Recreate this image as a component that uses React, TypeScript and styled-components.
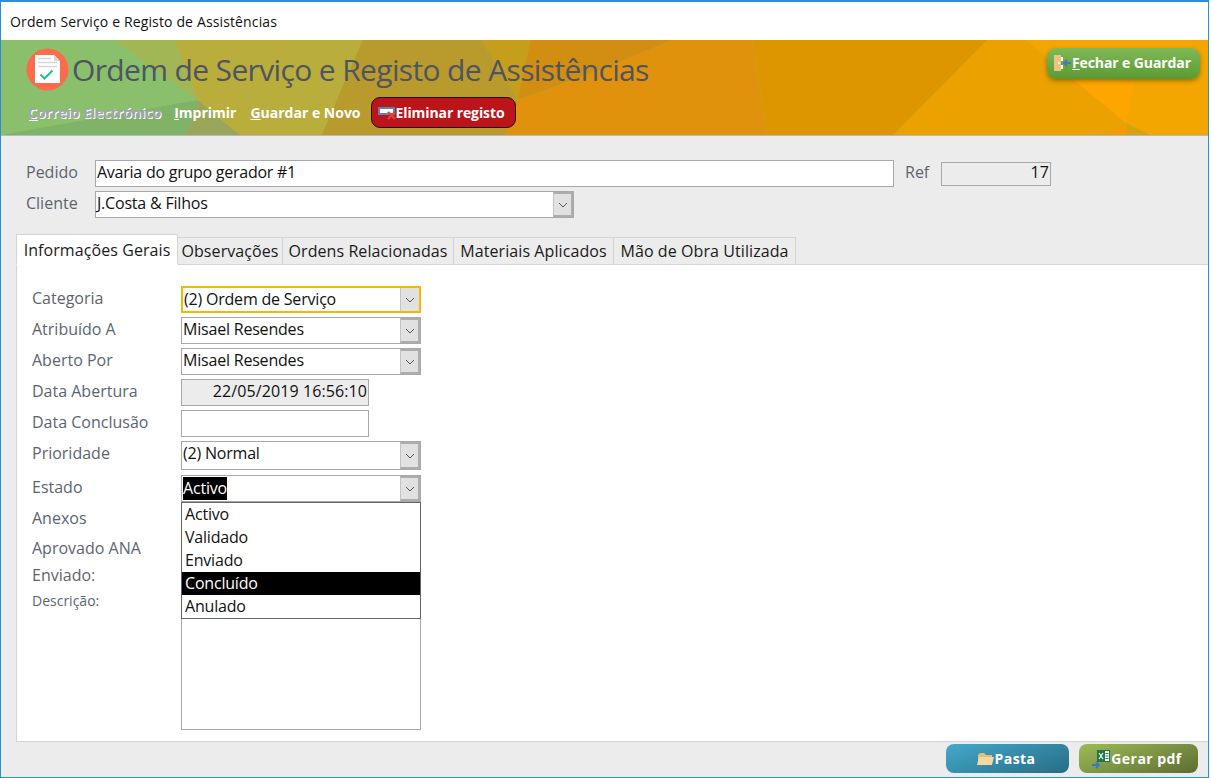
import React from 'react';
import styled, { createGlobalStyle } from 'styled-components';

const GlobalStyle = createGlobalStyle`
  html, body {
    margin: 0;
    padding: 0;
    background: #fff;
    font-family: 'Open Sans', 'Noto Sans', 'Liberation Sans', sans-serif;
  }
  * { box-sizing: border-box; }
`;

const Window = styled.div`
  display: flex;
  flex-direction: column;
  width: 1209px;
  height: 778px;
  border: 1px solid #2b8fd8;
  border-top-width: 2px;
  overflow: hidden;
  background: #ececec;
`;

const TitleBar = styled.div`
  display: flex;
  align-items: center;
  height: 38px;
  padding: 0 0 0 9px;
  background: #fff;
  font-size: 14px;
  letter-spacing: 0.14px;
  color: #111;
`;

const Banner = styled.header`
  position: relative;
  flex: none;
  height: 96px;
  padding: 8px 8px 0 25px;
  border-bottom: 1px solid #b9b9b9;
  overflow: hidden;
`;

const BannerArt = styled.svg`
  position: absolute;
  inset: 0;
  width: 100%;
  height: 95px;
`;

const HeadingRow = styled.div`
  position: relative;
  display: flex;
  align-items: flex-start;
  height: 49px;
`;

const Heading = styled.h1`
  margin: 0 0 0 3px;
  font-size: 30px;
  font-weight: 400;
  line-height: 43px;
  letter-spacing: -0.64px;
  color: #4e5462;
  white-space: nowrap;
`;

const CloseButton = styled.div`
  display: flex;
  align-items: center;
  gap: 1px;
  height: 31px;
  margin-left: auto;
  padding: 0 8px 2px 7px;
  width: 153px;
  border-radius: 9px;
  background: linear-gradient(#7fb955, #5b9a33);
  box-shadow: 0 2px 4px rgba(90, 70, 0, 0.55);
  font-size: 14px;
  font-weight: 700;
  letter-spacing: -0.1px;
  color: #fff;
  white-space: nowrap;
`;

const ActionRow = styled.nav`
  position: relative;
  display: flex;
  align-items: center;
  height: 31px;
  padding-left: 2px;
`;

const ActionLink = styled.span<{ $disabled?: boolean; $gap?: number }>`
  margin-right: ${p => p.$gap ?? 13}px;
  font-size: 14px;
  font-weight: 700;
  color: ${p => (p.$disabled ? '#a3a3b4' : '#fff')};
  text-shadow: ${p => (p.$disabled ? '1px 1px 0 #fff' : 'none')};
  white-space: nowrap;
`;

const AccessKey = styled.span`
  text-decoration: underline;
`;

const DeleteButton = styled.div`
  display: flex;
  align-items: center;
  flex: none;
  height: 31px;
  width: 145px;
  padding-left: 6px;
  border: 1px solid #2a0c0c;
  border-radius: 9px;
  background: #bb141a;
  font-size: 14px;
  font-weight: 700;
  letter-spacing: -0.1px;
  color: #fff;
  white-space: nowrap;
`;

const Body = styled.main`
  flex: 1;
  display: flex;
  flex-direction: column;
  min-height: 0;
  padding: 24px 0 0 15px;
`;

const TopRow = styled.div<{ $gap?: number }>`
  display: flex;
  align-items: center;
  height: 27px;
  margin-bottom: ${p => p.$gap ?? 4}px;
  padding-left: 10px;
`;

const TopLabel = styled.label<{ $width?: number; $inset?: number }>`
  width: ${p => p.$width ?? 69}px;
  margin-left: ${p => p.$inset ?? 0}px;
  padding-bottom: 3px;
  font-size: 16px;
  color: #5b6572;
`;

const Field = styled.div<{ $width: number; $height?: number; $readOnly?: boolean; $right?: boolean }>`
  display: flex;
  align-items: center;
  justify-content: ${p => (p.$right ? 'flex-end' : 'flex-start')};
  flex: none;
  width: ${p => p.$width}px;
  height: ${p => p.$height ?? 27}px;
  padding: 0 1px 3px;
  border: 1px solid #a8a8ab;
  background: ${p => (p.$readOnly ? '#ececec' : '#fff')};
  font-size: 16px;
  letter-spacing: ${p => (p.$right ? 0.1 : -0.25)}px;
  color: #111;
  white-space: nowrap;
`;

const Combo = styled.div<{ $width: number; $height?: number; $focused?: boolean }>`
  position: relative;
  display: flex;
  align-items: stretch;
  flex: none;
  width: ${p => p.$width}px;
  height: ${p => p.$height ?? 27}px;
  border: ${p => (p.$focused ? '2px solid #f5b800' : '1px solid #a8a8ab')};
  background: #fff;
  font-size: 16px;
  letter-spacing: -0.2px;
  color: #111;
`;

const ComboText = styled.div<{ $raised?: number }>`
  flex: 1;
  display: flex;
  align-items: center;
  padding: 0 1px ${p => p.$raised ?? 3}px;
  white-space: nowrap;
`;

const ComboArrow = styled.div<{ $focused?: boolean }>`
  display: flex;
  align-items: center;
  justify-content: center;
  width: ${p => (p.$focused ? 19 : 20)}px;
  border: solid #adadad;
  border-width: ${p => (p.$focused ? 0 : '2px 2px 2px 0')};
  border-left: 1px solid #c4c4c4;
  background: #e1e1e1;
`;

const Selected = styled.span`
  display: block;
  height: 23px;
  line-height: 22px;
  margin-top: 2px;
  background: #000;
  color: #fff;
`;

const TabStrip = styled.div`
  position: relative;
  z-index: 1;
  display: flex;
  align-items: flex-end;
  height: 31px;
  margin-top: 16px;
  margin-bottom: -1px;
`;

const Tab = styled.div<{ $active?: boolean; $width: number }>`
  display: flex;
  align-items: center;
  justify-content: center;
  width: ${p => p.$width}px;
  height: ${p => (p.$active ? 31 : 28)}px;
  border: 1px solid #d4d4d4;
  border-left-width: ${p => (p.$active ? 1 : 0)}px;
  border-bottom-color: ${p => (p.$active ? '#fff' : '#d4d4d4')};
  background: ${p => (p.$active ? '#fff' : '#ececec')};
  font-size: 16px;
  letter-spacing: 0.08px;
  color: #1a1a1a;
  white-space: nowrap;
`;

const Panel = styled.section`
  flex: none;
  height: 478px;
  padding: 21px 0 0 15px;
  border: 1px solid #d4d4d4;
  border-right: none;
  background: #fff;
`;

const FormRow = styled.div<{ $height?: number; $gap?: number; $top?: boolean }>`
  display: flex;
  align-items: ${p => (p.$top ? 'flex-start' : 'center')};
  height: ${p => p.$height ?? 27}px;
  margin-bottom: ${p => p.$gap ?? 4}px;
`;

const FormLabel = styled.label<{ $small?: boolean; $offset?: number; $lift?: number }>`
  flex: none;
  width: 149px;
  margin-top: ${p => p.$offset ?? 0}px;
  padding-bottom: ${p => p.$lift ?? 3}px;
  font-size: ${p => (p.$small ? 14 : 16)}px;
  color: #5b6572;
`;

const DropList = styled.ul`
  position: absolute;
  top: 26px;
  left: -1px;
  z-index: 2;
  width: 240px;
  margin: 0;
  padding: 0;
  list-style: none;
  border: 1px solid #646464;
  background: #fff;
`;

const DropItem = styled.li<{ $selected?: boolean }>`
  height: 23px;
  padding-left: 3px;
  line-height: 22px;
  background: ${p => (p.$selected ? '#000' : 'transparent')};
  color: ${p => (p.$selected ? '#fff' : '#111')};
`;

const DescriptionBox = styled.div`
  width: 240px;
  height: 140px;
  border: 1px solid #a8a8ab;
  background: #fff;
`;

const Footer = styled.footer`
  flex: 1;
  display: flex;
  justify-content: flex-end;
  gap: 10px;
  padding: 2px 10px 0 0;
`;

const FooterButton = styled.div<{ $tone: 'blue' | 'olive'; $width: number }>`
  display: flex;
  align-items: center;
  justify-content: center;
  gap: 1px;
  width: ${p => p.$width}px;
  height: 29px;
  padding-right: 3px;
  border-radius: 8px;
  background: ${p =>
    p.$tone === 'blue'
      ? 'linear-gradient(160deg, #43a9cb, #286c85)'
      : 'linear-gradient(160deg, #9dbb55, #5d6c34)'};
  font-size: 14px;
  font-weight: 700;
  letter-spacing: 0.45px;
  color: #fff;
  white-space: nowrap;
`;

const Chevron = () => (
  <svg width="10" height="6" viewBox="0 0 10 6" fill="none" aria-hidden="true">
    <path d="M1 1l4 4 4-4" stroke="#555" strokeWidth="1" />
  </svg>
);

const ArtPolys: [string, string][] = [
  ['0,0 1208,0 1208,95 0,95', '#8ac06b'],
  ['0,95 197,60 185,95', '#80b268'],
  ['113,0 174,0 197,60', '#a3b655'],
  ['197,60 239,95 185,95', '#9aa65a'],
  ['174,0 362,0 321,95 239,95 197,60', '#b9ad3b'],
  ['362,0 481,0 517,60 504,95 321,95', '#b99a2d'],
  ['481,0 530,0 517,60', '#c79d1c'],
  ['530,0 672,0 600,30 517,60', '#d28e10'],
  ['517,60 600,30 672,0 752,0 767,95 504,95', '#e0920d'],
  ['752,0 987,0 893,95 767,95', '#de9600'],
  ['987,0 1025,0 1126,83 1100,95 893,95', '#eba100'],
  ['1025,0 1208,0 1208,95 1150,95 1126,83', '#f3a600'],
  ['1060,29 1134,43 1126,83', '#ffa500'],
  ['1100,95 1126,83 1126,95', '#f59a00'],
  ['1126,83 1150,95 1126,95', '#d9a010'],
];

const NoteIcon = () => (
  <svg width="43" height="43" viewBox="0 0 43 43" aria-hidden="true">
    <circle cx="21.5" cy="21.5" r="21" fill="#fb6b4c" />
    <path d="M9 7h19l6 6v22H9z" fill="#fff" />
    <path d="M28 7l6 6h-6z" fill="#d8d8d8" />
    <path d="M12 10.5h13M12 14.5h19M12 18.5h19" stroke="#d5d5da" strokeWidth="1.3" />
    <path d="M14.5 26.5l4 4 8-8" fill="none" stroke="#2bbd9a" strokeWidth="2.2" />
  </svg>
);

const DoorIcon = () => (
  <svg width="17" height="18" viewBox="0 0 17 18" aria-hidden="true">
    <path d="M0 1h7v16H0z" fill="#e8c585" />
    <path d="M7 3h2v4H7zM7 11h2v4H7z" fill="#fff" />
    <circle cx="5" cy="9" r="0.9" fill="#fff" />
    <path d="M17 9H10M13 6l-3 3 3 3" fill="none" stroke="#4a78b8" strokeWidth="2" />
  </svg>
);

const RemoveIcon = () => (
  <svg width="18" height="16" viewBox="0 0 18 16" aria-hidden="true">
    <rect x="1" y="3" width="15" height="6" fill="#fff" stroke="#5f83b5" strokeWidth="2" />
    <path d="M10 7l7 7M17 7l-7 7" stroke="#d9453c" strokeWidth="2.4" />
  </svg>
);

const FolderIcon = () => (
  <svg width="17" height="14" viewBox="0 0 17 14" aria-hidden="true">
    <path d="M1 13V3l2-2h4l2 2h6v10z" fill="#e6bd7a" />
    <path d="M0 13l2-8h15l-2 8z" fill="#f5d7a2" />
  </svg>
);

const SheetIcon = () => (
  <svg width="18" height="20" viewBox="0 0 18 20" aria-hidden="true">
    <rect x="5" y="1" width="13" height="12" fill="#1f7a45" />
    <rect x="13" y="2" width="4" height="10" fill="#fff" />
    <path d="M7 4l4 6M11 4l-4 6" stroke="#fff" strokeWidth="1.2" />
    <path d="M13.5 4.5h3M13.5 7h3M13.5 9.5h3" stroke="#1f7a45" />
    <path d="M0 16h6M4 13l3 3-3 3" fill="none" stroke="#3c78c0" strokeWidth="1.8" />
  </svg>
);

const STATES = ['Activo', 'Validado', 'Enviado', 'Concluído', 'Anulado'];

const TABS = [
  { label: 'Informações Gerais', width: 162, active: true },
  { label: 'Observações', width: 105 },
  { label: 'Ordens Relacionadas', width: 171 },
  { label: 'Materiais Aplicados', width: 160 },
  { label: 'Mão de Obra Utilizada', width: 182 },
];

const App: React.FC = () => {
  return (
    <>
      <GlobalStyle />
      <Window>
        <TitleBar>Ordem Serviço e Registo de Assistências</TitleBar>

        <Banner>
          <BannerArt viewBox="0 0 1208 95" preserveAspectRatio="none" aria-hidden="true">
            {ArtPolys.map(([points, fill]) => (
              <polygon key={points} points={points} fill={fill} />
            ))}
          </BannerArt>
          <HeadingRow>
            <NoteIcon />
            <Heading>Ordem de Serviço e Registo de Assistências</Heading>
            <CloseButton>
              <DoorIcon />
              <span>
                <AccessKey>F</AccessKey>echar e Guardar
              </span>
            </CloseButton>
          </HeadingRow>
          <ActionRow>
            <ActionLink $disabled>
              <AccessKey>C</AccessKey>orreio Electrónico
            </ActionLink>
            <ActionLink $gap={14}>
              <AccessKey>I</AccessKey>mprimir
            </ActionLink>
            <ActionLink $gap={10}>
              <AccessKey>G</AccessKey>uardar e Novo
            </ActionLink>
            <DeleteButton>
              <RemoveIcon />
              Eliminar registo
            </DeleteButton>
          </ActionRow>
        </Banner>

        <Body>
          <TopRow>
            <TopLabel>Pedido</TopLabel>
            <Field $width={799}>Avaria do grupo gerador #1</Field>
            <TopLabel $width={36} $inset={11}>Ref</TopLabel>
            <Field $width={110} $height={24} $readOnly $right>17</Field>
          </TopRow>
          <TopRow $gap={0}>
            <TopLabel>Cliente</TopLabel>
            <Combo $width={479}>
              <ComboText>J.Costa &amp; Filhos</ComboText>
              <ComboArrow><Chevron /></ComboArrow>
            </Combo>
          </TopRow>

          <TabStrip>
            {TABS.map(tab => (
              <Tab key={tab.label} $active={tab.active} $width={tab.width}>{tab.label}</Tab>
            ))}
          </TabStrip>

          <Panel>
            <FormRow>
              <FormLabel>Categoria</FormLabel>
              <Combo $width={240} $focused>
                <ComboText $raised={2}>(2) Ordem de Serviço</ComboText>
                <ComboArrow $focused><Chevron /></ComboArrow>
              </Combo>
            </FormRow>
            <FormRow>
              <FormLabel>Atribuído A</FormLabel>
              <Combo $width={240}>
                <ComboText>Misael Resendes</ComboText>
                <ComboArrow><Chevron /></ComboArrow>
              </Combo>
            </FormRow>
            <FormRow>
              <FormLabel>Aberto Por</FormLabel>
              <Combo $width={240}>
                <ComboText>Misael Resendes</ComboText>
                <ComboArrow><Chevron /></ComboArrow>
              </Combo>
            </FormRow>
            <FormRow>
              <FormLabel>Data Abertura</FormLabel>
              <Field $width={188} $readOnly $right>22/05/2019 16:56:10</Field>
            </FormRow>
            <FormRow>
              <FormLabel>Data Conclusão</FormLabel>
              <Field $width={188} />
            </FormRow>
            <FormRow $height={29} $gap={5}>
              <FormLabel $lift={5}>Prioridade</FormLabel>
              <Combo $width={240} $height={29}>
                <ComboText $raised={5}>(2) Normal</ComboText>
                <ComboArrow><Chevron /></ComboArrow>
              </Combo>
            </FormRow>
            <FormRow $gap={3}>
              <FormLabel>Estado</FormLabel>
              <Combo $width={240}>
                <ComboText $raised={2}><Selected>Activo</Selected></ComboText>
                <ComboArrow><Chevron /></ComboArrow>
                <DropList>
                  {STATES.map(state => (
                    <DropItem key={state} $selected={state === 'Concluído'}>{state}</DropItem>
                  ))}
                </DropList>
              </Combo>
            </FormRow>
            <FormRow $gap={4}>
              <FormLabel $lift={1}>Anexos</FormLabel>
            </FormRow>
            <FormRow $height={24} $gap={3}>
              <FormLabel $lift={1}>Aprovado ANA</FormLabel>
            </FormRow>
            <FormRow $height={24} $gap={3}>
              <FormLabel $lift={1}>Enviado:</FormLabel>
            </FormRow>
            <FormRow $height={140} $gap={0} $top>
              <FormLabel $small $offset={1}>Descrição:</FormLabel>
              <DescriptionBox />
            </FormRow>
          </Panel>

          <Footer>
            <FooterButton $tone="blue" $width={123}>
              <FolderIcon />
              Pasta
            </FooterButton>
            <FooterButton $tone="olive" $width={119}>
              <SheetIcon />
              Gerar pdf
            </FooterButton>
          </Footer>
        </Body>
      </Window>
    </>
  );
};

export default App;
